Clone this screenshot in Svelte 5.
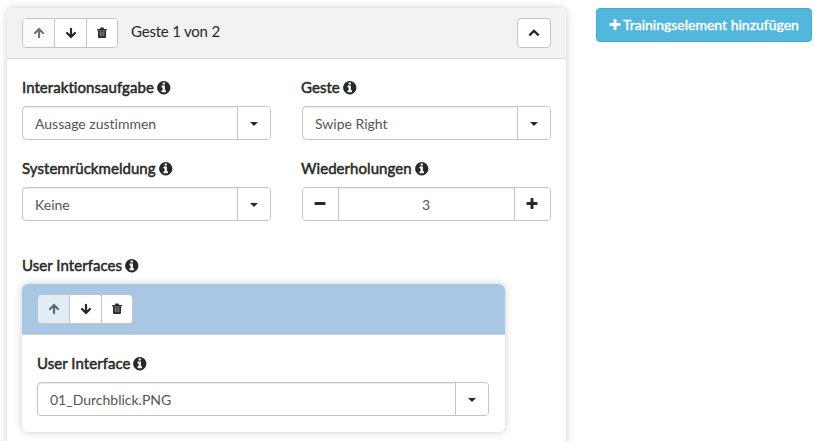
<script>
  const paths = {
    info: 'M1152 1376v-160q0-14-9-23t-23-9h-96v-512q0-14-9-23t-23-9h-320q-14 0-23 9t-9 23v160q0 14 9 23t23 9h96v320h-96q-14 0-23 9t-9 23v160q0 14 9 23t23 9h448q14 0 23-9t9-23zm-128-896v-160q0-14-9-23t-23-9h-192q-14 0-23 9t-9 23v160q0 14 9 23t23 9h192q14 0 23-9t9-23zm640 416q0 209-103 385.500t-279.500 279.500-385.500 103-385.500-103-279.500-279.500-103-385.500 103-385.500 279.500-279.500 385.500-103 385.500 103 279.500 279.500 103 385.500z',
    plus: 'M1600 736v192q0 40-28 68t-68 28h-416v416q0 40-28 68t-68 28h-192q-40 0-68-28t-28-68v-416h-416q-40 0-68-28t-28-68v-192q0-40 28-68t68-28h416v-416q0-40 28-68t68-28h192q40 0 68 28t28 68v416h416q40 0 68 28t28 68z',
    minus: 'M1600 736v192q0 40-28 68t-68 28h-1216q-40 0-68-28t-28-68v-192q0-40 28-68t68-28h1216q40 0 68 28t28 68z'
  };
</script>

{#snippet fa(name, size)}
  <svg class="fa" width={size} height={size} viewBox="0 0 1792 1792"><path d={paths[name]} /></svg>
{/snippet}

{#snippet tools()}
  <div class="tools">
    <button class="tool off" aria-label="Nach oben">
      <svg width="12" height="12" viewBox="0 0 12 12"><path class="line" d="M6 10.200V2.500M2 6L6 2l4 4" /></svg>
    </button>
    <button class="tool" aria-label="Nach unten">
      <svg width="12" height="12" viewBox="0 0 12 12"><path class="line" d="M6 1.800v7.700M2 6l4 4 4-4" /></svg>
    </button>
    <button class="tool" aria-label="Löschen">
      <svg width="12" height="12" viewBox="0 0 12 12">
        <path d="M1.200 1.900h2.900V1.300q0-.7.700-.7h2.400q.7 0 .7.700v.6h2.900v1.500H1.200z" />
        <path d="M2 3.400h8V9.800q0 1.300-1.300 1.300H3.300Q2 11.100 2 9.800z" />
        <path class="slots" d="M4.200 4.300v5M6 4.300v5M7.800 4.300v5" />
      </svg>
    </button>
  </div>
{/snippet}

{#snippet label(text)}
  <div class="label"><span>{text}</span>{@render fa('info', 15.5)}</div>
{/snippet}

{#snippet select(text, value)}
  <div class="field">
    {@render label(text)}
    <div class="control">
      <div class="value">{value}</div>
      <button class="drop" aria-label="Auswahl öffnen"><i class="caret"></i></button>
    </div>
  </div>
{/snippet}

<main>
  <section class="card">
    <header>
      {@render tools()}
      <span class="title">Geste 1 von 2</span>
      <button class="collapse" aria-label="Einklappen">
        <svg width="12" height="12" viewBox="0 0 12 12"><path class="chev" d="M1.300 8.300L6 3.900l4.700 4.400" /></svg>
      </button>
    </header>
    <div class="body">
      <div class="grid">
        {@render select('Interaktionsaufgabe', 'Aussage zustimmen')}
        {@render select('Geste', 'Swipe Right')}
        {@render select('Systemrückmeldung', 'Keine')}
        <div class="field">
          {@render label('Wiederholungen')}
          <div class="control">
            <button class="step" aria-label="Weniger">{@render fa('minus', 14)}</button>
            <div class="value count">3</div>
            <button class="step right" aria-label="Mehr">{@render fa('plus', 14)}</button>
          </div>
        </div>
      </div>
      <div class="group">{@render label('User Interfaces')}</div>
      <section class="inner">
        <div class="bar">{@render tools()}</div>
        <div class="content">{@render select('User Interface', '01_Durchblick.PNG')}</div>
      </section>
    </div>
  </section>
  <button class="add">{@render fa('plus', 14)}<span>Trainingselement hinzufügen</span></button>
</main>

<style>
  :global(body) { overflow: hidden; background: #fff; }
  main, main :global(*) { box-sizing: border-box; }
  main {
    display: flex;
    align-items: flex-start;
    gap: 30px;
    width: 815px;
    height: 441px;
    padding: 8px 0 0 7px;
    overflow: hidden;
    font: 14px/20px Lato, sans-serif;
    font-variant-ligatures: none;
    color: #282828;
  }
  svg { display: block; fill: currentColor; flex: none; }
  button { padding: 0; font: inherit; font-variant-ligatures: none; color: inherit; background: #fff; }
  .card {
    flex: none;
    width: 559px;
    height: 480px;
    border-radius: 6px;
    background: #fff;
    box-shadow: 0 0 8px rgba(0, 0, 0, .2);
  }
  header {
    display: flex;
    align-items: center;
    height: 51px;
    padding: 0 15px 1px;
    border-bottom: 1px solid #d6d6d6;
    border-radius: 6px 6px 0 0;
    background: #f2f2f2;
  }
  .tools { display: flex; width: 96px; height: 30px; border: 1px solid #c4c4c4; border-radius: 4px; overflow: hidden; }
  .tool { display: flex; align-items: center; justify-content: center; width: 32px; border: 0; border-left: 1px solid #c4c4c4; }
  .tool:first-child { width: 31px; border-left: 0; }
  .tool:last-child { width: 31px; }
  .off { color: #737373; background: #fbfbfb; }
  .line { fill: none; stroke: currentColor; stroke-width: 2.200; stroke-linecap: round; }
  .slots { fill: none; stroke: #aaa; stroke-width: .8; }
  .chev { fill: none; stroke: currentColor; stroke-width: 2.300; }
  .title { padding-bottom: 3px; margin-left: 13px; font-size: 15px; letter-spacing: -.2px; }
  .collapse { display: flex; align-items: center; justify-content: center; width: 34px; height: 30px; margin-left: auto; border: 1px solid #c4c4c4; border-radius: 4px; }
  .body { padding: 17px 15px 0; }
  .grid { display: grid; grid-template-columns: 249px 249px; column-gap: 31px; row-gap: 17px; }
  .label { display: flex; align-items: center; gap: 2px; height: 22px; margin-bottom: 8px; font-size: 15px; letter-spacing: .05px; -webkit-text-stroke: .5px currentColor; }
  .label :global(svg) { margin-top: 1px; }
  .grid .field:nth-child(even) .label { margin-left: -1px; }
  .field { height: 64px; }
  .control { display: flex; height: 34px; border: 1px solid #c4c4c4; border-radius: 4px; overflow: hidden; }
  .value { flex: 1; padding: 7px 12px 0; line-height: 20px; color: #555; box-shadow: inset 0 1px 1px rgba(0, 0, 0, .075); }
  .drop, .step { display: flex; align-items: center; justify-content: center; width: 33px; padding-top: 2px; border: 0; border-left: 1px solid #c4c4c4; }
  .step { width: 36px; padding: 0 1px 0 0; border-left: 0; border-right: 1px solid #c4c4c4; }
  .step.right { border-right: 0; border-left: 1px solid #c4c4c4; }
  .count { padding-left: 11px; text-align: center; }
  .caret { border: 4px solid transparent; border-top-color: currentColor; border-bottom: 0; }
  .group { margin-top: 33px; }
  .inner { width: 483px; height: 148px; border-radius: 6px; box-shadow: 0 0 8px rgba(0, 0, 0, .2); }
  .bar { height: 51px; padding: 10px 15px; border-bottom: 1px solid #d0d0d0; border-radius: 6px 6px 0 0; background: #a8c7e5; }
  .bar :global(.off) { background: #e0ecf6; color: #5f686f; }
  .content { padding: 17px 16px 0 15px; }
  .add {
    display: flex;
    align-items: center;
    gap: 1px;
    width: 216px;
    height: 34px;
    padding: 0 11px;
    border: 1px solid #3bb0d6;
    border-radius: 4px;
    background: #52b7da;
    color: #fff;
    white-space: nowrap;
    -webkit-text-stroke: .4px currentColor;
  }
</style>
